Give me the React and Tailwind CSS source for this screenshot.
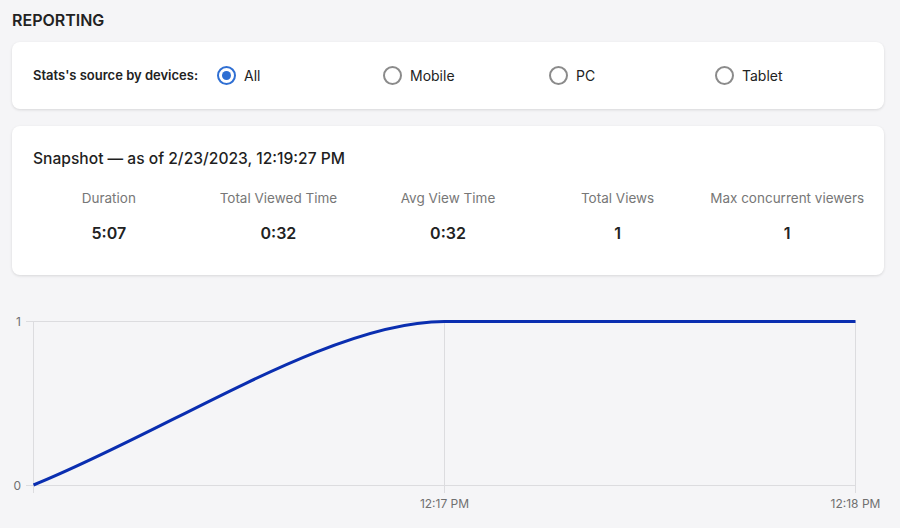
import React from "react";

const options = ["All", "Mobile", "PC", "Tablet"];
const stats = [
  ["Duration", "5:07"],
  ["Total Viewed Time", "0:32"],
  ["Avg View Time", "0:32"],
  ["Total Views", "1"],
  ["Max concurrent viewers", "1"],
];

function Radio({ checked, label }) {
  return (
    <div className="flex items-center gap-[8px] w-[166px]">
      {checked ? (
        <span className="w-[19px] h-[19px] rounded-full border-2 border-[#2f6fd3] flex items-center justify-center">
          <span className="w-[9px] h-[9px] rounded-full bg-[#2f6fd3]" />
        </span>
      ) : (
        <span className="w-[19px] h-[19px] rounded-full border-2 border-[#8b8b8b]" />
      )}
      <span className="text-[14px] text-[#222]">{label}</span>
    </div>
  );
}

export default function App() {
  return (
    <div
      className="w-[900px] h-[528px] bg-[#f5f5f7] overflow-hidden"
      style={{ fontFamily: "Inter, 'Noto Sans', sans-serif" }}
    >
      <div className="pl-[12px] pr-[16px] pt-[11px]">
        <h1 className="text-[16px] font-semibold text-[#222] leading-[19px]">REPORTING</h1>
        <div className="mt-[12px] h-[67px] bg-white rounded-[8px] shadow-[0_1px_3px_rgba(0,0,0,0.12)] flex items-center pl-[21px]">
          <span className="text-[13px] font-semibold text-[#222] w-[184px]">Stats's source by devices:</span>
          {options.map((o, i) => (
            <Radio key={o} checked={i === 0} label={o} />
          ))}
        </div>
        <div className="mt-[17px] h-[149px] bg-white rounded-[8px] shadow-[0_1px_3px_rgba(0,0,0,0.12)] px-[12px] pt-[23px]">
          <div className="pl-[9px] text-[15.6px] font-medium text-[#1f1f1f] leading-[20px]">
            Snapshot — as of 2/23/2023, 12:19:27 PM
          </div>
          <div className="grid grid-cols-5 mt-[19px]">
            {stats.map(([l, v]) => (
              <div key={l} className="flex flex-col items-center">
                <span className="text-[13.5px] text-[#777] leading-[20px]">{l}</span>
                <span className="mt-[15px] text-[16px] font-semibold text-[#222] leading-[20px]">{v}</span>
              </div>
            ))}
          </div>
        </div>
      </div>
      <svg width="900" height="240" viewBox="0 288 900 240" className="block mt-[13px]">
        <g stroke="#dcdcdf" strokeWidth="1" fill="none">
          <line x1="33.5" y1="321.5" x2="855.5" y2="321.5" />
          <line x1="26" y1="321.5" x2="33.5" y2="321.5" />
          <line x1="33.5" y1="485.5" x2="855.5" y2="485.5" />
          <line x1="26" y1="485.5" x2="33.5" y2="485.5" />
          <line x1="33.5" y1="321" x2="33.5" y2="493" />
          <line x1="444.5" y1="321" x2="444.5" y2="493" />
          <line x1="855.5" y1="321" x2="855.5" y2="493" />
        </g>
        <g fill="#707070" fontSize="12" fontFamily="Inter, 'Noto Sans', sans-serif">
          <text x="21" y="325.5" textAnchor="end">1</text>
          <text x="21" y="489.5" textAnchor="end">0</text>
          <text x="444.5" y="507.5" textAnchor="middle">12:17 PM</text>
          <text x="855.5" y="507.5" textAnchor="middle">12:18 PM</text>
        </g>
        <path
          d="M33.5,485 C170,430 330,321.5 444.5,321.5 L855.5,321.5"
          fill="none"
          stroke="#0a2eb0"
          strokeWidth="3"
        />
      </svg>
    </div>
  );
}
